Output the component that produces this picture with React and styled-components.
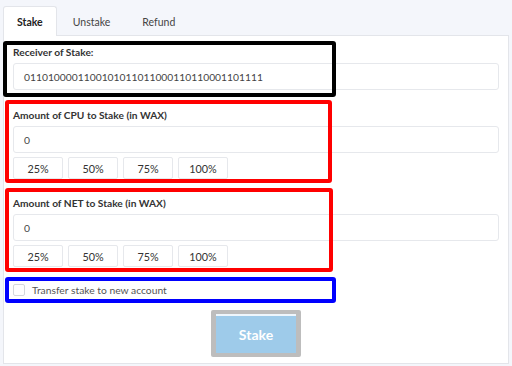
import React from "react";
import styled, { createGlobalStyle } from "styled-components";

const Global = createGlobalStyle`
  html, body { margin: 0; padding: 0; background: #ffffff; }
  body { font-family: Lato, "Open Sans", sans-serif; color: #333; }
  * { box-sizing: border-box; }
`;

const Page = styled.div`
  width: 512px;
  height: 366px;
  background: #f4f6fb;
  padding: 5px 3px 2px 3px;
  display: flex;
  flex-direction: column;
`;

const TabBar = styled.div`
  display: flex;
  height: 30px;
`;

const Tab = styled.div`
  padding: 0 ${(p) => (p.$active ? 13 : 15)}px;
  display: flex;
  align-items: center;
  font-size: 10.5px;
  font-weight: ${(p) => (p.$active ? 700 : 400)};
  color: ${(p) => (p.$active ? "#222" : "#444")};
  background: ${(p) => (p.$active ? "#ffffff" : "transparent")};
  border: 1px solid ${(p) => (p.$active ? "#e3e5ea" : "transparent")};
  border-bottom: none;
  border-radius: 3px 3px 0 0;
  position: relative;
  top: 1px;
`;

const Panel = styled.div`
  flex: 1;
  background: #ffffff;
  border: 1px solid #e3e5ea;
  padding: 5px 9px 0 9px;
  display: flex;
  flex-direction: column;
`;

const Section = styled.div`
  position: relative;
  padding: ${(p) => p.$pad};
  margin-top: ${(p) => p.$mt}px;
  display: flex;
  flex-direction: column;
`;

const Highlight = styled.div`
  position: absolute;
  top: 0;
  bottom: 0;
  left: ${(p) => p.$left}px;
  width: ${(p) => p.$width}px;
  border: 4px solid ${(p) => p.$color};
  border-radius: 3px;
  pointer-events: none;
`;

const Label = styled.div`
  font-size: 10.2px;
  font-weight: 700;
  color: #333;
  height: 12px;
  line-height: 12px;
`;

const Input = styled.div`
  margin-top: 5px;
  height: 27px;
  border: 1px solid #e6e8ec;
  border-radius: 3px;
  padding: 0 10px;
  display: flex;
  align-items: center;
  font-size: 10.3px;
  color: #444;
`;

const ButtonRow = styled.div`
  display: flex;
  gap: 5px;
  margin-top: 4px;
`;

const PctButton = styled.div`
  width: 50px;
  height: 22px;
  border: 1px solid #e6e8ec;
  border-radius: 2px;
  display: flex;
  align-items: center;
  justify-content: center;
  font-size: 10.8px;
  color: #333;
`;

const CheckRow = styled.label`
  display: flex;
  align-items: center;
  gap: 7px;
  height: 26px;
  font-size: 10.3px;
  color: #555;
`;

const Box = styled.span`
  width: 12px;
  height: 12px;
  border: 1px solid #d4d7dc;
  border-radius: 2px;
  background: #fff;
`;

const Footer = styled.div`
  display: flex;
  justify-content: center;
  margin-top: 7px;
`;

const StakeButton = styled.div`
  width: 90px;
  height: 47px;
  background: #bdbdbd;
  border-radius: 2px;
  padding: 4px 5px;
`;

const StakeInner = styled.div`
  height: 100%;
  background: #9ecbea;
  border-top: 2px solid #eef6fc;
  display: flex;
  align-items: center;
  justify-content: center;
  color: #ffffff;
  font-weight: 700;
  font-size: 14px;
`;

const pcts = ["25%", "50%", "75%", "100%"];

export default function App() {
  return (
    <Page>
      <Global />
      <TabBar>
        <Tab $active>Stake</Tab>
        <Tab>Unstake</Tab>
        <Tab>Refund</Tab>
      </TabBar>
      <Panel>
        <Section $pad="5px 0 7px 0" $mt={0}>
          <Highlight $left={-10} $width={333} $color="#000000" />
          <Label>Receiver of Stake:</Label>
          <Input>0110100001100101011011000110110001101111</Input>
        </Section>
        <Section $pad="9px 0 4px 0" $mt={3}>
          <Highlight $left={-8} $width={327} $color="#ff0000" />
          <Label>Amount of CPU to Stake (in WAX)</Label>
          <Input>0</Input>
          <ButtonRow>
            {pcts.map((p) => (
              <PctButton key={p}>{p}</PctButton>
            ))}
          </ButtonRow>
        </Section>
        <Section $pad="9px 0 5px 0" $mt={5}>
          <Highlight $left={-8} $width={328} $color="#ff0000" />
          <Label>Amount of NET to Stake (in WAX)</Label>
          <Input>0</Input>
          <ButtonRow>
            {pcts.map((p) => (
              <PctButton key={p}>{p}</PctButton>
            ))}
          </ButtonRow>
        </Section>
        <Section $pad="0" $mt={5}>
          <Highlight $left={-8} $width={331} $color="#0000ff" />
          <CheckRow>
            <Box />
            Transfer stake to new account
          </CheckRow>
        </Section>
        <Footer>
          <StakeButton>
            <StakeInner>Stake</StakeInner>
          </StakeButton>
        </Footer>
      </Panel>
    </Page>
  );
}
